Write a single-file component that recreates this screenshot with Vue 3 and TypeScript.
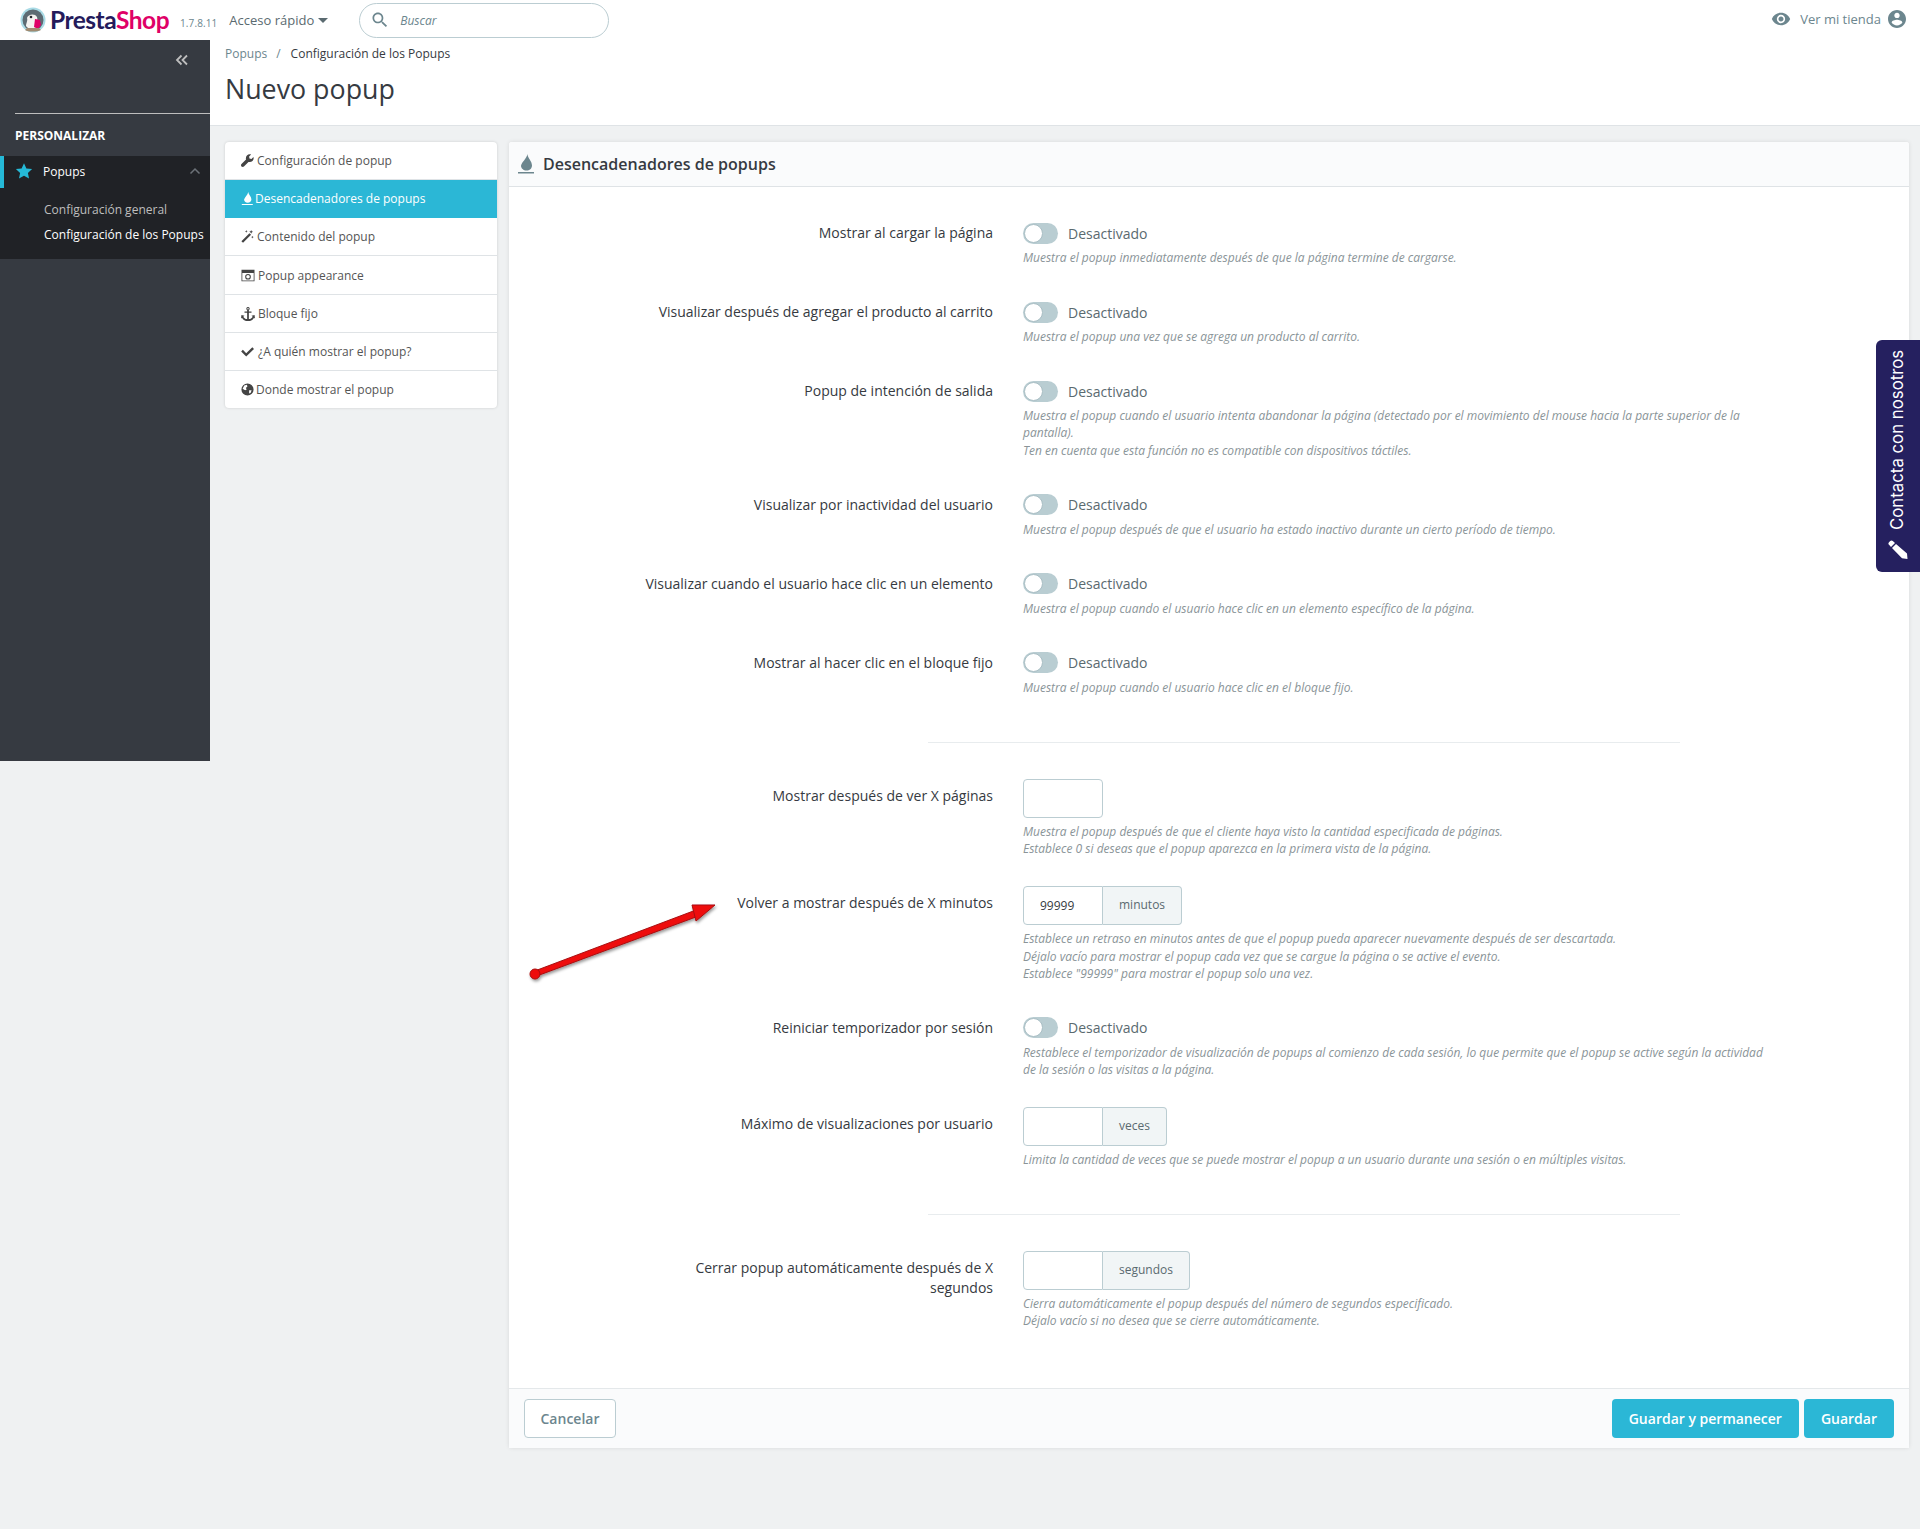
<script setup lang="ts">
interface Row {
  label: string
  kind: 'toggle' | 'entry'
  help: string[]
  value?: string
  addon?: string
  rule?: boolean
}

const icons: Record<string, string> = {
  wrench: 'M15.3 3.6 12.9 6l-2.500-.4L10 3.100 12.400.7C10.600.1 8.600.5 7.300 1.900 6 3.200 5.700 5.100 6.200 6.700L.6 12.300c-.8.8-.8 2.100 0 3 .8.8 2.200.8 3 0l5.600-5.600c1.700.6 3.600.2 4.900-1.100 1.400-1.300 1.800-3.300 1.200-5Z',
  flame: 'M9 0C9 3 12.800 5.500 12.800 9c0 2.500-2 4.300-4.600 4.300S3.800 11.200 3.800 9.200C4.800 6 8 4 9 0ZM1 14.700h13.500V16H1Z',
  wand: 'M.5 13.800 10.400 3.900l2 2-9.900 9.900ZM12.500 0l.7 1.600 1.600.7-1.600.7-.7 1.600-.7-1.600-1.600-.7 1.600-.7ZM6.500 0l.5 1.200 1.200.5-1.200.5-.5 1.200-.5-1.200-1.200-.5 1.200-.5ZM14 7l.5 1.200 1.200.5-1.200.5-.5 1.200-.5-1.200-1.200-.5 1.200-.5Z',
  camera: 'M0 1h16v14H0ZM1 5v9h14V5ZM8 6a3.500 3.500 0 1 0 0 7 3.500 3.500 0 0 0 0-7ZM8 7.300a2.200 2.200 0 1 1 0 4.400 2.200 2.200 0 0 1 0-4.400Z',
  anchor: 'M8 0a2 2 0 0 1 1 3.700V5h3v1.600H9v7.200c2.200-.3 3.800-1.400 4.400-2.800L12 10l3.500-1 .5 4-1.200-.8C13.800 14.800 11.200 16 8 16s-5.800-1.200-6.800-3.800L0 13l.5-4L4 10l-1.400 1c.6 1.400 2.200 2.500 4.400 2.800V6.600H4V5h3V3.700A2 2 0 0 1 8 0Zm0 1.200a.8.8 0 1 0 0 1.600.8.8 0 0 0 0-1.600Z',
  check: 'M13.900 2.700 16 4.800 6.400 14.200.2 8l2.100-2.100 4.100 4.100Z',
  globe: 'M8 .5a7.500 7.500 0 1 0 0 15 7.500 7.500 0 0 0 0-15ZM4 3l3-1 1 2-2 2 1 2-2 1-3-2ZM10 9h3l-1 3-2 1Z',
}

const tabs = [
  { icon: 'wrench', text: 'Configuración de popup' },
  { icon: 'flame', text: 'Desencadenadores de popups', active: true },
  { icon: 'wand', text: 'Contenido del popup' },
  { icon: 'camera', text: 'Popup appearance' },
  { icon: 'anchor', text: 'Bloque fijo' },
  { icon: 'check', text: '¿A quién mostrar el popup?' },
  { icon: 'globe', text: 'Donde mostrar el popup' },
]

const rows: Row[] = [
  { label: 'Mostrar al cargar la página', kind: 'toggle', help: ['Muestra el popup inmediatamente después de que la página termine de cargarse.'] },
  { label: 'Visualizar después de agregar el producto al carrito', kind: 'toggle', help: ['Muestra el popup una vez que se agrega un producto al carrito.'] },
  { label: 'Popup de intención de salida', kind: 'toggle', help: ['Muestra el popup cuando el usuario intenta abandonar la página (detectado por el movimiento del mouse hacia la parte superior de la', 'pantalla).', 'Ten en cuenta que esta función no es compatible con dispositivos táctiles.'] },
  { label: 'Visualizar por inactividad del usuario', kind: 'toggle', help: ['Muestra el popup después de que el usuario ha estado inactivo durante un cierto período de tiempo.'] },
  { label: 'Visualizar cuando el usuario hace clic en un elemento', kind: 'toggle', help: ['Muestra el popup cuando el usuario hace clic en un elemento específico de la página.'] },
  { label: 'Mostrar al hacer clic en el bloque fijo', kind: 'toggle', rule: true, help: ['Muestra el popup cuando el usuario hace clic en el bloque fijo.'] },
  { label: 'Mostrar después de ver X páginas', kind: 'entry', help: ['Muestra el popup después de que el cliente haya visto la cantidad especificada de páginas.', 'Establece 0 si deseas que el popup aparezca en la primera vista de la página.'] },
  { label: 'Volver a mostrar después de X minutos', kind: 'entry', value: '99999', addon: 'minutos', help: ['Establece un retraso en minutos antes de que el popup pueda aparecer nuevamente después de ser descartada.', 'Déjalo vacío para mostrar el popup cada vez que se cargue la página o se active el evento.', 'Establece "99999" para mostrar el popup solo una vez.'] },
  { label: 'Reiniciar temporizador por sesión', kind: 'toggle', help: ['Restablece el temporizador de visualización de popups al comienzo de cada sesión, lo que permite que el popup se active según la actividad', 'de la sesión o las visitas a la página.'] },
  { label: 'Máximo de visualizaciones por usuario', kind: 'entry', addon: 'veces', rule: true, help: ['Limita la cantidad de veces que se puede mostrar el popup a un usuario durante una sesión o en múltiples visitas.'] },
  { label: 'Cerrar popup automáticamente después de X segundos', kind: 'entry', addon: 'segundos', help: ['Cierra automáticamente el popup después del número de segundos especificado.', 'Déjalo vacío si no desea que se cierre automáticamente.'] },
]
</script>

<template>
  <div class="page">
    <header class="topbar">
      <div class="brand">
        <svg class="puffin" viewBox="0 0 26 26">
          <circle cx="13" cy="13" r="12.500" fill="#a9dbe6" />
          <circle cx="13" cy="13" r="10.500" fill="#5d6b73" />
          <path d="M7 11c1-4 8-5 10-1 1 3 0 4-2 5l1 6c-4 2-8 1-10-2 0-3 2-5 1-8Z" fill="#f4f2f0" />
          <path d="M15 12l5 1 1 5-3 4-4-2Z" fill="#df0067" />
          <path d="M5 23c3 2 12 2 16 0l-2-2H7Z" fill="#a08a70" />
          <circle cx="11" cy="10" r="1.300" fill="#26262e" />
        </svg>
        <span class="wordmark"><span class="presta">Presta</span><span class="shop">Shop</span></span>
        <span class="version">1.7.8.11</span>
      </div>
      <div class="quick">Acceso rápido<i class="caret"></i></div>
      <div class="search">
        <svg class="search-icon" viewBox="0 0 24 24"><path d="M15.500 14h-.79l-.28-.27C15.410 12.590 16 11.110 16 9.500 16 5.910 13.090 3 9.500 3S3 5.910 3 9.500 5.910 16 9.500 16c1.610 0 3.090-.59 4.230-1.570l.27.280v.790l5 4.990L20.490 19l-4.990-5zm-6 0C7.010 14 5 11.990 5 9.500S7.010 5 9.500 5 14 7.010 14 9.500 11.990 14 9.500 14z" /></svg>
        <span>Buscar</span>
      </div>
      <div class="shop-link">
        <svg class="eye" viewBox="0 0 24 24"><path d="M12 4.500C7 4.500 2.730 7.610 1 12c1.730 4.390 6 7.500 11 7.500s9.270-3.110 11-7.500c-1.730-4.390-6-7.500-11-7.500zM12 17c-2.760 0-5-2.240-5-5s2.240-5 5-5 5 2.240 5 5-2.240 5-5 5zm0-8c-1.660 0-3 1.340-3 3s1.340 3 3 3 3-1.340 3-3-1.340-3-3-3z" /></svg>
        <span>Ver mi tienda</span>
        <svg class="account" viewBox="2 2 20 20"><path d="M12 2C6.480 2 2 6.480 2 12s4.480 10 10 10 10-4.480 10-10S17.520 2 12 2zm0 3c1.660 0 3 1.340 3 3s-1.340 3-3 3-3-1.340-3-3 1.340-3 3-3zm0 14.200c-2.500 0-4.710-1.280-6-3.220.03-1.990 4-3.080 6-3.080 1.990 0 5.970 1.090 6 3.080-1.290 1.940-3.500 3.220-6 3.220z" /></svg>
      </div>
    </header>

    <div class="shell">
      <aside class="sidebar">
        <div class="collapse">
          <svg viewBox="0 0 14 12"><path d="M6.500 1.500 2 6l4.500 4.500M12 1.500 7.500 6l4.500 4.500" /></svg>
        </div>
        <div class="side-rule"></div>
        <div class="side-title">PERSONALIZAR</div>
        <div class="side-group">
          <div class="side-head">
            <svg class="star" viewBox="0 0 24 24"><path d="M12 1.500 15.200 8.500l7.600.9-5.600 5.200 1.500 7.500L12 18.300 5.300 22.100l1.500-7.500L1.200 9.400l7.600-.9Z" /></svg>
            <span>Popups</span>
            <svg class="chev" viewBox="0 0 12 8"><path d="M1.500 6.500 6 2l4.500 4.500" /></svg>
          </div>
          <ul class="side-sub">
            <li>Configuración general</li>
            <li class="current">Configuración de los Popups</li>
          </ul>
        </div>
      </aside>

      <main class="main">
        <div class="page-head">
          <div class="crumbs"><span class="crumb-root">Popups</span><span class="crumb-sep">/</span><span>Configuración de los Popups</span></div>
          <h1>Nuevo popup</h1>
        </div>

        <div class="content">
          <nav class="tabs">
            <a v-for="t in tabs" :key="t.text" class="tab" :class="{ active: t.active }">
              <svg class="tab-icon" :class="'ic-' + t.icon" viewBox="0 0 16 16"><path fill-rule="evenodd" :d="icons[t.icon]" /></svg>
              <span>{{ t.text }}</span>
            </a>
          </nav>

          <section class="panel">
            <div class="panel-head">
              <svg class="panel-icon" viewBox="0 0 16 20"><path d="M9.500 0C9.500 4 14 7 14 11.500c0 3-2.500 5-5.500 5S3 14.300 3 11.700C4 7.500 8.500 5 9.500 0ZM0 18h16v1.500H0Z" /></svg>
              <span>Desencadenadores de popups</span>
            </div>
            <div class="panel-body">
              <template v-for="r in rows" :key="r.label">
                <div class="row" :class="'row-' + r.kind">
                  <label class="row-label">{{ r.label }}</label>
                  <div class="row-control">
                    <div v-if="r.kind === 'toggle'" class="switch-line">
                      <span class="switch"><span class="knob"></span></span>
                      <span class="switch-text">Desactivado</span>
                    </div>
                    <div v-else class="input-line">
                      <span class="field" :class="{ joined: r.addon }">{{ r.value }}</span>
                      <span v-if="r.addon" class="addon">{{ r.addon }}</span>
                    </div>
                    <p class="help"><template v-for="(line, i) in r.help" :key="i"><br v-if="i" />{{ line }}</template></p>
                  </div>
                </div>
                <hr v-if="r.rule" class="divider" />
              </template>
            </div>
            <div class="panel-foot">
              <button class="btn ghost">Cancelar</button>
              <div class="foot-right">
                <button class="btn primary">Guardar y permanecer</button>
                <button class="btn primary">Guardar</button>
              </div>
            </div>
          </section>
        </div>
      </main>
    </div>

    <svg class="annotation" viewBox="0 0 200 80" width="200" height="80">
      <defs>
        <filter id="arrowShadow" x="-10%" y="-20%" width="120%" height="150%">
          <feDropShadow dx="1" dy="2" stdDeviation="1.500" flood-color="#000" flood-opacity=".4" />
        </filter>
      </defs>
      <g filter="url(#arrowShadow)" fill="#ee0c10" stroke="#a80b0e" stroke-width="1">
        <path d="M10 65.500 170 5l2.500 6L12 70.500Z" />
        <circle cx="9" cy="69" r="5" />
        <path d="M189 0 166 0 170 16Z" />
      </g>
    </svg>

    <aside class="contact">
      <svg class="pencil" viewBox="0 0 20 20"><path d="M4.800 1 7 3 3 7 1 4.800C.2 4 .2 3 1 2.200L2.200 1C3 .2 4 .2 4.800 1ZM8 4 19 13.500l.5 5.500-5.500-.8L4 8Z" /></svg>
      <span class="contact-text">Contacta con nosotros</span>
    </aside>
  </div>
</template>

<style>
html, body { background: #eff1f2; }
</style>

<style scoped>
.page {
  position: relative;
  min-height: 1529px;
  background: #eff1f2;
  font-family: "Open Sans", "Noto Sans", sans-serif;
  color: #363a41;
  overflow: hidden;
}

/* Top bar */
.topbar {
  height: 40px;
  background: #fff;
  display: flex;
  align-items: center;
}
.brand { display: flex; align-items: center; margin-left: 20px; }
.puffin { width: 26px; height: 26px; margin-right: 4px; }
.wordmark {
  font-family: Lato, sans-serif;
  font-size: 24.500px;
  font-weight: 700;
  letter-spacing: -0.5px;
  line-height: 40px;
}
.presta { color: #251b5b; }
.shop { color: #df0067; }
.version { font-size: 10px; margin: 5px 0 0 11px; color: #6c868e; letter-spacing: .1px; }
.quick { margin-left: 12px; font-size: 13px; color: #5a6a70; display: flex; align-items: center; }
.caret {
  width: 0; height: 0; margin-left: 4px; margin-top: 1px;
  border-left: 5px solid transparent;
  border-right: 5px solid transparent;
  border-top: 5px solid #5a6a70;
}
.search {
  margin-left: 31px;
  width: 250px;
  height: 35px;
  box-sizing: border-box;
  border: 1px solid #bbcdd2;
  border-radius: 18px;
  display: flex;
  align-items: center;
  font-size: 12px;
  font-style: italic;
  color: #6c868e;
}
.search-icon { width: 20px; height: 20px; margin: 0 10px 0 10px; fill: #6c868e; }
.shop-link { margin-left: auto; margin-right: 14px; margin-top: -2px; display: flex; align-items: center; font-size: 13px; color: #6c868e; }
.eye { width: 20px; height: 20px; margin-right: 9px; fill: #6c868e; }
.account { width: 18px; height: 18px; margin-left: 7px; fill: #6c868e; }

/* Shell */
.shell { display: flex; align-items: flex-start; }

.sidebar {
  width: 210px;
  height: 721px;
  flex: none;
  background: #363a41;
  color: #fff;
}
.collapse { height: 73px; display: flex; justify-content: flex-end; box-sizing: border-box; padding: 14px 21px 0 0; }
.collapse svg { width: 14px; height: 12px; fill: none; stroke: #bebebe; stroke-width: 1.800; }
.side-rule { height: 1px; margin-left: 15px; background: #bebebe; }
.side-title { font-size: 12px; font-weight: 700; padding-left: 15px; margin-top: 14px; line-height: 16px; }
.side-group { background: #202226; margin-top: 12px; height: 103px; }
.side-head {
  height: 32px;
  border-left: 4px solid #25b9d7;
  display: flex;
  align-items: center;
  box-sizing: border-box;
  padding: 0 0 2px 11px;
  font-size: 12px;
}
.star { width: 18px; height: 18px; fill: #25b9d7; margin-right: 10px; }
.chev { width: 12px; height: 8px; margin-left: auto; margin-right: 9px; fill: none; stroke: #6c7278; stroke-width: 1.500; }
.side-sub { list-style: none; margin: 9px 0 0; padding: 0 0 0 44px; font-size: 12px; line-height: 25px; color: #bebebe; white-space: nowrap; }
.current { color: #fff; }

/* Main */
.main { flex: 1; min-width: 0; }
.page-head {
  height: 86px;
  box-sizing: border-box;
  background: #fff;
  border-bottom: 1px solid #dfe3e6;
  padding-left: 15px;
}
.crumbs { font-size: 12px; line-height: 16px; padding-top: 6px; color: #363a41; }
.crumb-root { color: #6c868e; }
.crumb-sep { margin: 0 10px 0 9px; color: #6c868e; }
h1 { margin: 8px 0 0; font-size: 26.800px; font-weight: 400; line-height: 38px; color: #363a41; }

.content { display: flex; align-items: flex-start; gap: 12px; padding: 16px 11px 0 15px; }

.tabs {
  width: 272px;
  flex: none;
  box-sizing: border-box;
  background: #fff;
  border-radius: 4px;
  box-shadow: 0 0 3px rgba(0, 0, 0, .15);
  overflow: hidden;
}
.tab {
  height: 38px;
  box-sizing: border-box;
  padding-left: 16px;
  border-bottom: 1px solid #dfe3e6;
  display: flex;
  align-items: center;
  font-size: 12px;
  color: #555;
}
.tab:nth-child(4) { height: 39px; }
.tab:last-child { height: 37px; border-bottom: 0; }
.tab.active { background: #2bb7d6; color: #fff; border-bottom-color: #2bb7d6; }
.tab-icon { width: 13px; height: 13px; margin-right: 3px; fill: #444; flex: none; }
.tab.active .tab-icon { fill: #fff; }
.tab-icon.ic-flame { width: 13px; height: 15px; margin-right: 1px; }
.tab-icon.ic-camera { width: 14px; height: 13px; margin-right: 3px; }
.tab-icon.ic-anchor { width: 14px; height: 14px; margin-right: 3px; }
.tab-icon.ic-check { width: 13px; margin-right: 4px; }
.tab-icon.ic-globe { margin-right: 2px; }

.panel {
  flex: 1;
  min-width: 0;
  background: #fff;
  border-radius: 3px;
  box-shadow: 0 0 4px rgba(0, 0, 0, .1);
}
.panel-head {
  height: 45px;
  box-sizing: border-box;
  background: #fafbfc;
  border-bottom: 1px solid #dfe3e6;
  border-radius: 3px 3px 0 0;
  padding-left: 9px;
  display: flex;
  align-items: center;
  font-size: 16px;
  font-weight: 600;
  color: #363a41;
}
.panel-icon { width: 16px; height: 20px; fill: #6c868e; margin-right: 9px; }
.panel-body { padding: 29px 0 29px; }

.row { display: flex; margin-bottom: 29px; }
.row-label {
  width: 354px;
  margin-left: 130px;
  flex: none;
  text-align: right;
  font-size: 14px;
  line-height: 20px;
  padding-top: 7px;
  box-sizing: border-box;
  color: #363a41;
}
.row-control { margin-left: 30px; flex: 1; min-width: 0; }
.switch-line { height: 26px; margin-top: 4px; display: flex; align-items: center; }
.switch {
  width: 35px;
  height: 21px;
  border-radius: 11px;
  background: #b9cdd2;
  position: relative;
  flex: none;
}
.knob {
  position: absolute;
  left: 1px; top: 1px;
  width: 19px; height: 19px;
  box-sizing: border-box;
  border: 1px solid #a9bec4;
  border-radius: 50%;
  background: #fff;
}
.switch-text { margin-left: 10px; font-size: 14px; color: #5a6a70; }
.input-line { display: flex; height: 39px; }
.field {
  width: 80px;
  box-sizing: border-box;
  border: 1px solid #bbcdd2;
  border-radius: 4px;
  background: #fff;
  padding-left: 16px;
  font-size: 12px;
  line-height: 37px;
}
.field.joined { border-radius: 4px 0 0 4px; }
.addon {
  box-sizing: border-box;
  border: 1px solid #bbcdd2;
  border-left: 0;
  border-radius: 0 4px 4px 0;
  background: #f1f5f6;
  padding: 0 16px;
  font-size: 12px;
  line-height: 36px;
  color: #5a6a70;
}
.help {
  margin: 3px 0 0;
  font-size: 12px;
  font-style: italic;
  line-height: 17.140px;
  color: #8a9498;
}
.row-entry .help { margin-top: 5px; }
.divider {
  width: 752px;
  height: 1px;
  border: 0;
  margin: 46px 0 36px 419px;
  background: #e8ecee;
}

.panel-foot {
  height: 60px;
  box-sizing: border-box;
  background: #fafbfc;
  border-top: 1px solid #e4e8ea;
  padding: 10px 15px 0;
  display: flex;
  justify-content: space-between;
  align-items: flex-start;
}
.foot-right { display: flex; gap: 5px; }
.btn {
  height: 39px;
  box-sizing: border-box;
  border-radius: 4px;
  font-family: inherit;
  font-size: 14px;
  font-weight: 600;
}
.ghost { width: 92px; background: #fff; border: 1px solid #bbcdd2; color: #6c868e; }
.primary { background: #2bb7d6; border: 0; color: #fff; padding: 0 17px; }

/* Overlays */
.annotation { position: absolute; left: 526px; top: 905px; overflow: visible; }
.contact {
  position: absolute;
  right: 0;
  top: 340px;
  width: 44px;
  height: 232px;
  background: #25205f;
  border-radius: 6px 0 0 6px;
  color: #fff;
}
.contact-text {
  position: absolute;
  left: 21px;
  bottom: 42px;
  white-space: nowrap;
  font-family: Inter, sans-serif;
  font-size: 16.800px;
  line-height: 20px;
  transform-origin: 0 100%;
  transform: rotate(-90deg) translateY(100%) translate(0, -10px);
}
.pencil { position: absolute; left: 12px; bottom: 12px; width: 20px; height: 20px; fill: #fff; }
</style>
